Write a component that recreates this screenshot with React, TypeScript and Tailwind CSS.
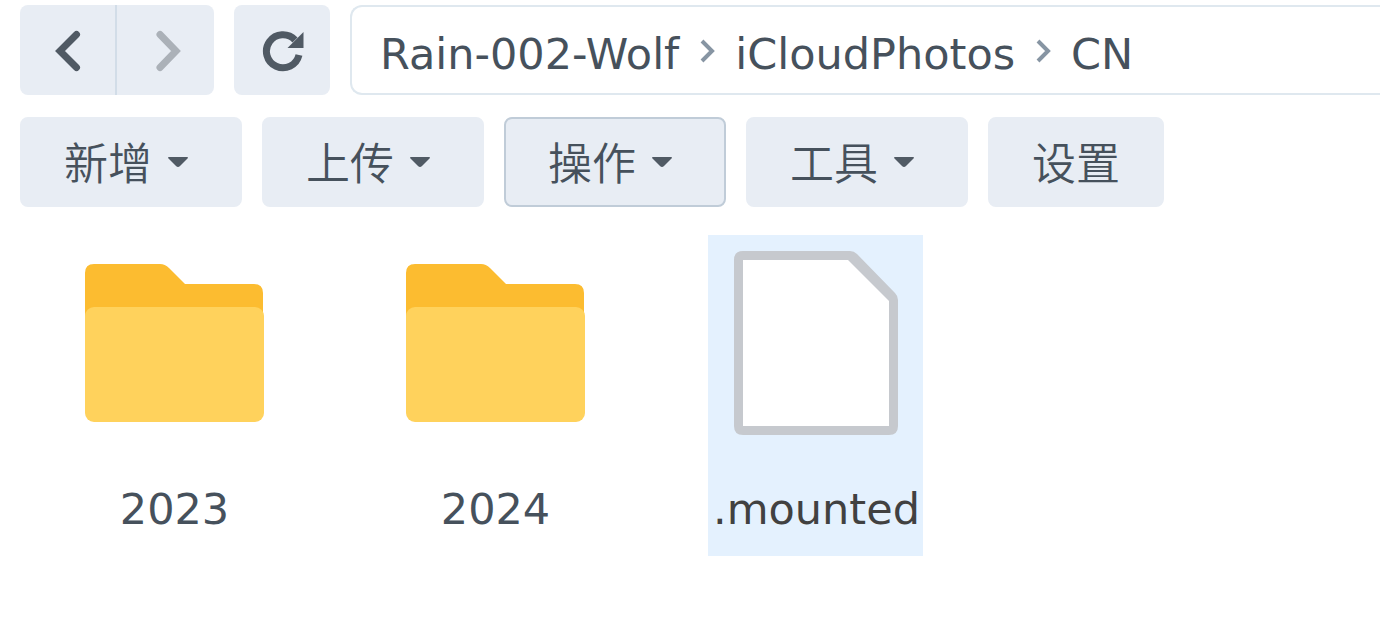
import { useState } from "react";

interface ToolbarItem {
  label: string;
  hasMenu: boolean;
}

interface FileItem {
  name: string;
  type: "folder" | "file";
}

const toolbarItems: ToolbarItem[] = [
  { label: "新增", hasMenu: true },
  { label: "上传", hasMenu: true },
  { label: "操作", hasMenu: true },
  { label: "工具", hasMenu: true },
  { label: "设置", hasMenu: false },
];

const crumbs = ["Rain-002-Wolf", "iCloudPhotos", "CN"];

const files: FileItem[] = [
  { name: "2023", type: "folder" },
  { name: "2024", type: "folder" },
  { name: ".mounted", type: "file" },
];

function BackIcon() {
  return (
    <svg viewBox="0 0 44 44" className="w-11 h-11" fill="none" stroke="#505a64" strokeWidth="7" strokeLinecap="round" aria-hidden="true">
      <path d="M30.5 6.5 14 23l16.5 16.5" />
    </svg>
  );
}

function ForwardIcon() {
  return (
    <svg viewBox="0 0 44 44" className="w-11 h-11" fill="none" stroke="#abb1b8" strokeWidth="7" strokeLinecap="round" aria-hidden="true">
      <path d="M16 6.5 32 23 16 39.5" />
    </svg>
  );
}

function RefreshIcon() {
  return (
    <svg viewBox="0 0 44 44" className="w-11 h-11" aria-hidden="true">
      <path d="M35 12A16.5 16.5 0 1 0 39 27" fill="none" stroke="#505a64" strokeWidth="7" />
      <path d="M43.5 4v16h-16z" fill="#505a64" />
    </svg>
  );
}

function FolderIcon() {
  return (
    <svg viewBox="0 0 215 215" className="w-full" aria-hidden="true">
      <path d="M28 29h66q5 0 9 4l16 16h69q9 0 9 9v60H19V38q0-9 9-9z" fill="#fcbc30" />
      <rect x="19" y="72" width="179" height="115" rx="9" fill="#ffd25c" />
    </svg>
  );
}

function DocumentIcon() {
  return (
    <svg viewBox="0 0 215 215" className="w-full" aria-hidden="true">
      <path d="M35 16H142q4 0 7 3l38 39q3 3 3 7V191q0 9-9 9H35q-9 0-9-9V25q0-9 9-9z" fill="#c6c9ce" />
      <path d="M35 25H140L181 66V191H35z" fill="#fff" />
    </svg>
  );
}

export default function App() {
  const [selected, setSelected] = useState(".mounted");
  const [openMenu, setOpenMenu] = useState("操作");

  return (
    <div className="min-h-screen bg-white overflow-hidden text-[#46515c] font-['DejaVu_Sans','Noto_Sans_CJK_SC',sans-serif]">
      {/* Navigation */}
      <header className="flex gap-5 pl-5 pt-[5px]">
        <div className="flex shrink-0 h-[90px] rounded-lg bg-[#e8edf4] overflow-hidden">
          <button aria-label="Back" className="flex items-center justify-center w-[97px] border-r-2 border-[#d2dde8]">
            <BackIcon />
          </button>
          <button aria-label="Forward" disabled className="flex items-center justify-center w-[97px]">
            <ForwardIcon />
          </button>
        </div>
        <button aria-label="Refresh" className="flex shrink-0 items-center justify-center w-24 h-[90px] rounded-lg bg-[#e8edf4]">
          <RefreshIcon />
        </button>
        <nav
          aria-label="Path"
          className="flex flex-1 items-center h-[90px] pl-7 pt-2 border-2 border-r-0 border-[#dfe8ef] rounded-l-xl text-[43px] leading-[52px] whitespace-nowrap"
        >
          {crumbs.map((crumb, i) => (
            <span key={crumb} className="flex items-center">
              {i > 0 && (
                <svg viewBox="0 0 56 24" className="w-14 h-6 mb-1.5" fill="none" stroke="#8795a3" strokeWidth="4" aria-hidden="true">
                  <path d="M23 2l10 10-10 10" />
                </svg>
              )}
              <a href="#">{crumb}</a>
            </span>
          ))}
        </nav>
      </header>

      {/* Toolbar */}
      <div className="flex gap-5 px-5 mt-[22px]">
        {toolbarItems.map((item) => (
          <button
            key={item.label}
            onClick={() => setOpenMenu(item.label)}
            className={`flex shrink-0 items-center h-[90px] pl-[42px] rounded-lg border-2 bg-[#e8edf4] text-[44px] leading-[52px] ${
              item.hasMenu ? "pr-[52px]" : "pr-[42px]"
            } ${openMenu === item.label ? "border-[#c0ccd8]" : "border-[#e8edf4]"}`}
          >
            <span className="pt-1.5 font-[350]">{item.label}</span>
            {item.hasMenu && (
              <svg viewBox="0 0 20 10" className="w-5 h-[10px] ml-4" aria-hidden="true">
                <path d="M1 0h18q2 0 0 2l-7 7q-2 2-4 0L1 2Q-1 0 1 0z" fill="#505a64" />
              </svg>
            )}
          </button>
        ))}
      </div>

      {/* Files */}
      <main className="flex flex-wrap gap-x-[106px] pl-[66px] mt-7">
        {files.map((file) => (
          <button
            key={file.name}
            onClick={() => setSelected(file.name)}
            className={`w-[215px] h-[321px] flex flex-col items-center ${
              selected === file.name ? "bg-[#e4f1fe] text-[#414141]" : ""
            }`}
          >
            {file.type === "folder" ? <FolderIcon /> : <DocumentIcon />}
            <span className="mt-[33px] pl-0.5 text-[43px] leading-[52px]">{file.name}</span>
          </button>
        ))}
      </main>
    </div>
  );
}
